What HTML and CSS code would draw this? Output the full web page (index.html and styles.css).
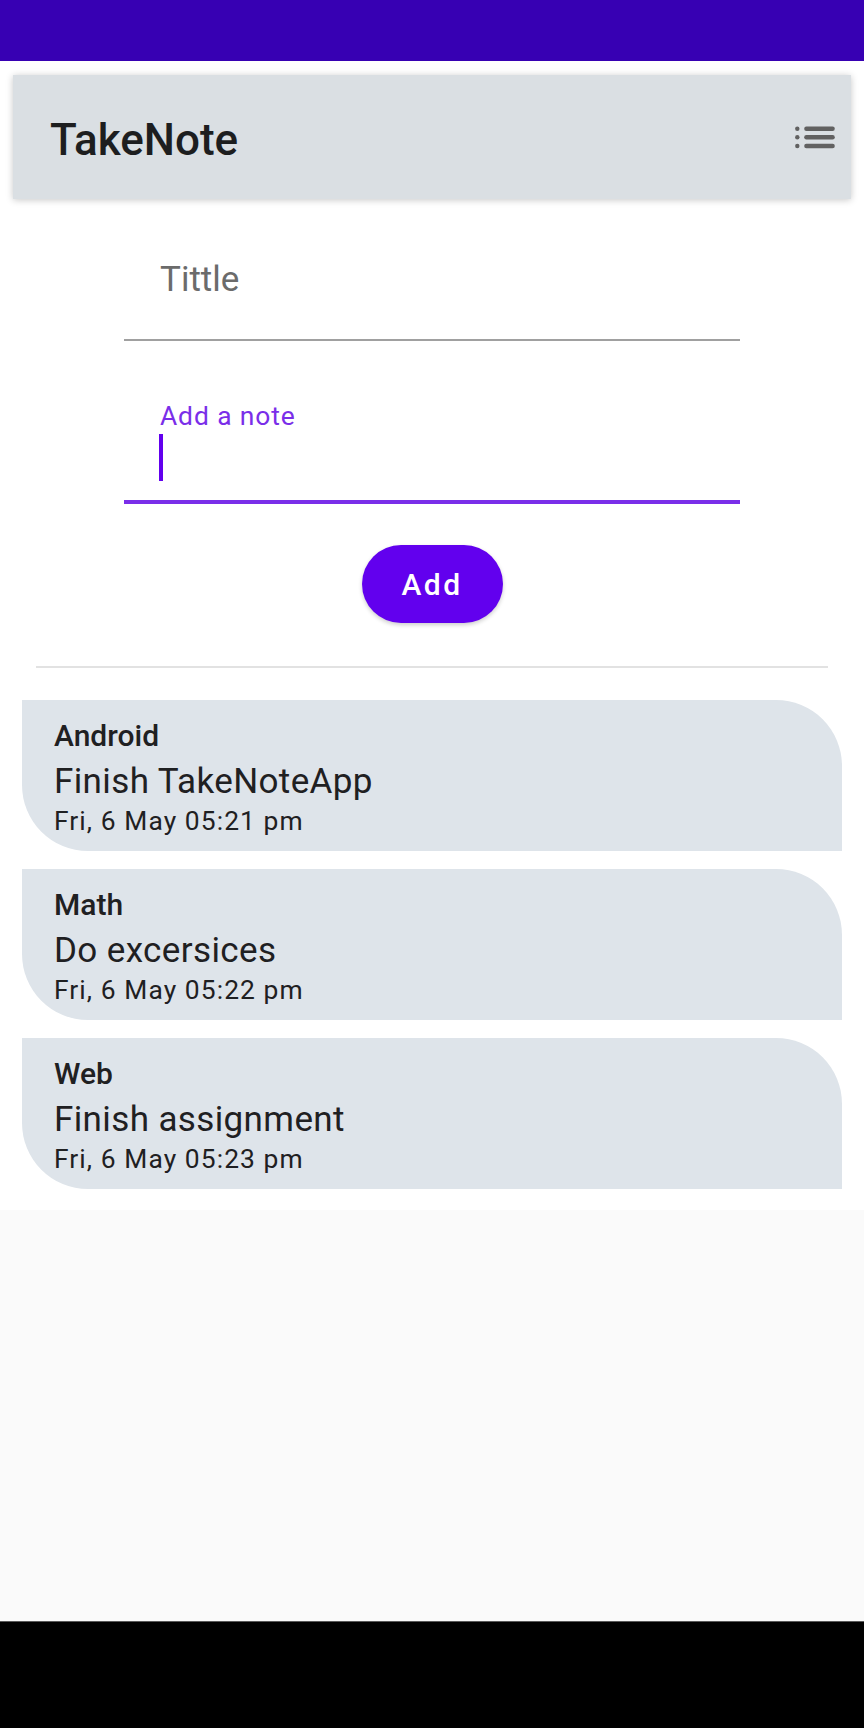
FILE: index.html
```html
<!DOCTYPE html>
<html lang="en">
<head>
<meta charset="utf-8">
<title>TakeNote</title>
<link rel="stylesheet" href="styles.css">
</head>
<body>
<div class="screen">
  <div class="statusbar"></div>
  <main class="app">
    <header class="toolbar">
      <h1 class="toolbar-title">TakeNote</h1>
      <svg class="toolbar-icon" width="42" height="24" viewBox="0 0 42 24" aria-hidden="true">
        <circle cx="3.3" cy="3.7" r="2.2"/>
        <circle cx="3.3" cy="12.3" r="2.2"/>
        <circle cx="3.3" cy="21" r="2.2"/>
        <line x1="12.4" y1="3.7" x2="38.6" y2="3.7"/>
        <line x1="12.4" y1="12.3" x2="38.6" y2="12.3"/>
        <line x1="12.4" y1="21" x2="38.6" y2="21"/>
      </svg>
    </header>

    <section class="form">
      <div class="field field-title">
        <span class="hint">Tittle</span>
      </div>
      <div class="field field-note">
        <span class="label">Add a note</span>
        <div class="input-line"><span class="cursor"></span></div>
      </div>
      <button class="add-btn" type="button">Add</button>
    </section>

    <div class="divider"></div>

    <ul class="notes">
      <li class="note">
        <div class="note-cat">Android</div>
        <div class="note-text">Finish TakeNoteApp</div>
        <div class="note-date">Fri, 6 May 05:21 pm</div>
      </li>
      <li class="note">
        <div class="note-cat">Math</div>
        <div class="note-text">Do excersices</div>
        <div class="note-date">Fri, 6 May 05:22 pm</div>
      </li>
      <li class="note">
        <div class="note-cat">Web</div>
        <div class="note-text">Finish assignment</div>
        <div class="note-date">Fri, 6 May 05:23 pm</div>
      </li>
    </ul>
  </main>
  <div class="filler"></div>
  <div class="navbar"></div>
</div>
</body>
</html>
```

FILE: styles.css
```css
* { box-sizing: border-box; }

html, body {
  margin: 0;
  padding: 0;
  background: #fafafa;
  font-family: Roboto, "Noto Sans", "Liberation Sans", sans-serif;
}

.screen {
  width: 864px;
  height: 1728px;
  display: flex;
  flex-direction: column;
}

.statusbar {
  height: 61px;
  background: #3700b3;
  flex: none;
}

.app {
  background: #ffffff;
  padding-top: 14px;
  padding-bottom: 21px;
  flex: none;
}

.toolbar {
  margin: 0 13px;
  height: 124px;
  background: #dadfe3;
  box-shadow: 0 1px 7px rgba(0, 0, 0, 0.22);
  display: flex;
  align-items: center;
  justify-content: space-between;
  padding: 5px 15px 0 37px;
}

.toolbar-title {
  margin: 0;
  font-size: 44px;
  font-weight: 500;
  color: #1d1e1f;
  line-height: 52px;
}

.toolbar-icon {
  margin-top: -5px;
  fill: #616161;
  stroke: #616161;
  stroke-width: 4.4;
  stroke-linecap: round;
}
.toolbar-icon circle { stroke: none; }

.form {
  display: flex;
  flex-direction: column;
  align-items: center;
}

.field {
  width: 616px;
  padding-left: 36px;
}

.field-title {
  margin-top: 13px;
  padding-top: 47px;
  padding-bottom: 39px;
  border-bottom: 2px solid #a0a0a0;
}

.hint {
  display: block;
  font-size: 35px;
  line-height: 41px;
  color: #6b6b6b;
}

.field-note {
  padding-top: 60px;
  padding-bottom: 19px;
  border-bottom: 4px solid #7a2ee9;
}

.label {
  display: block;
  font-size: 26.4px;
  line-height: 31px;
  letter-spacing: 0.9px;
  color: #7a2ee9;
}

.input-line {
  margin-top: 2px;
  height: 47px;
}

.cursor {
  display: block;
  width: 4px;
  height: 47px;
  margin-left: -1px;
  background: #6200ee;
}

.add-btn {
  margin-top: 41px;
  width: 141px;
  height: 78px;
  border: none;
  border-radius: 39px;
  background: #6200ee;
  color: #ffffff;
  font-family: inherit;
  font-size: 30px;
  font-weight: 500;
  letter-spacing: 2.4px;
  padding: 0;
  box-shadow: 0 2px 4px rgba(0, 0, 0, 0.2);
}

.divider {
  margin: 43px 36px 0;
  height: 2px;
  background: #e2e2e2;
}

.notes {
  list-style: none;
  margin: 32px 0 0;
  padding: 0 22px;
  display: flex;
  flex-direction: column;
  gap: 18px;
}

.note {
  height: 151px;
  background: #dee4ea;
  border-radius: 0 66px 0 66px;
  padding: 18px 0 0 32px;
  color: #1f2022;
}

.note-cat {
  font-size: 30px;
  font-weight: 500;
  line-height: 35px;
}

.note-text {
  margin-top: 8px;
  font-size: 35px;
  line-height: 41px;
  letter-spacing: 0.38px;
}

.note-date {
  margin-top: 4px;
  font-size: 26.4px;
  line-height: 30px;
  letter-spacing: 1.08px;
}

.filler {
  flex: 1;
  background: #fafafa;
}

.navbar {
  height: 107px;
  flex: none;
  background: #000000;
  border-top: 1px solid #5a5a5a;
}
```
